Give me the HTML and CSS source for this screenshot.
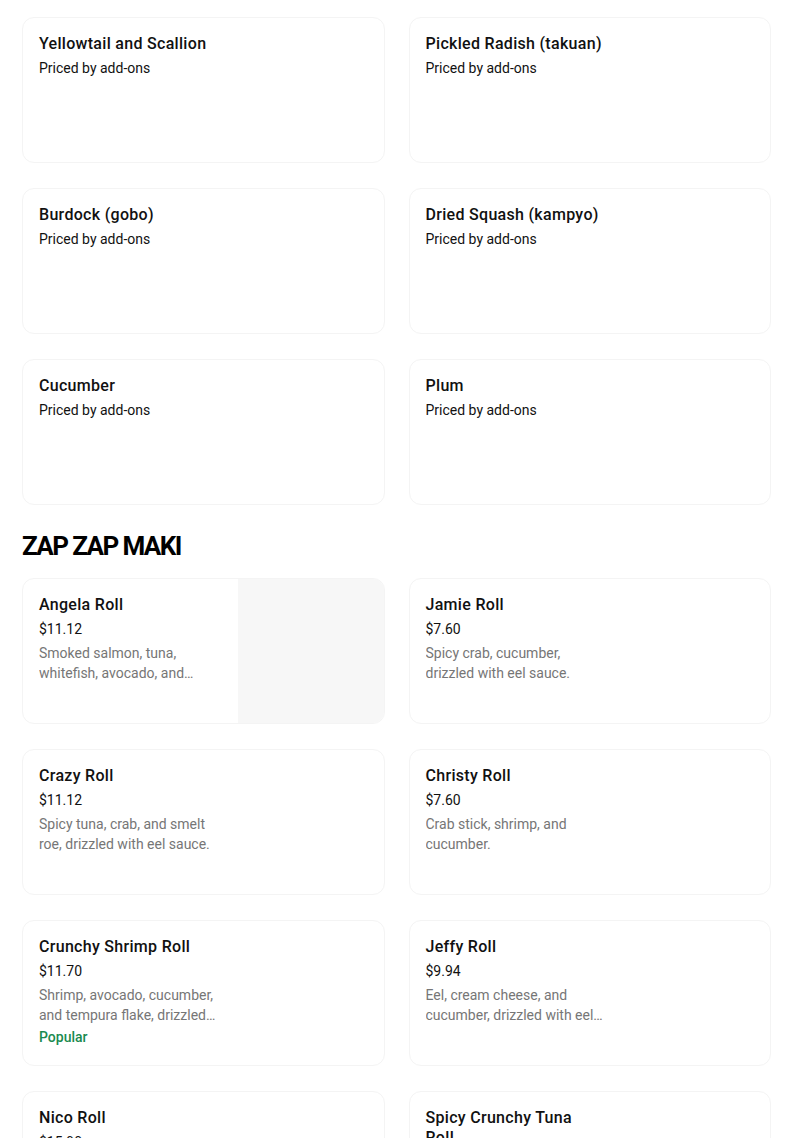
FILE: index.html
```html
<!DOCTYPE html>
<html lang="en">
<head>
<meta charset="utf-8">
<title>Menu</title>
<link rel="stylesheet" href="styles.css">
</head>
<body>
<main class="menu">
  <section class="section">
    <div class="grid">
      <div class="card"><div class="info"><div class="title">Yellowtail and Scallion</div><div class="price">Priced by add-ons</div></div><div class="thumb"></div></div>
      <div class="card"><div class="info"><div class="title">Pickled Radish (takuan)</div><div class="price">Priced by add-ons</div></div><div class="thumb"></div></div>
      <div class="card"><div class="info"><div class="title">Burdock (gobo)</div><div class="price">Priced by add-ons</div></div><div class="thumb"></div></div>
      <div class="card"><div class="info"><div class="title">Dried Squash (kampyo)</div><div class="price">Priced by add-ons</div></div><div class="thumb"></div></div>
      <div class="card"><div class="info"><div class="title">Cucumber</div><div class="price">Priced by add-ons</div></div><div class="thumb"></div></div>
      <div class="card"><div class="info"><div class="title">Plum</div><div class="price">Priced by add-ons</div></div><div class="thumb"></div></div>
    </div>
  </section>
  <section class="section">
    <h2 class="heading">ZAP ZAP MAKI</h2>
    <div class="grid">
      <div class="card"><div class="info"><div class="title">Angela Roll</div><div class="price">$11.12</div><div class="desc">Smoked salmon, tuna, whitefish, avocado, and cucumber, drizzled with eel sauce.</div></div><div class="thumb photo"></div></div>
      <div class="card"><div class="info"><div class="title">Jamie Roll</div><div class="price">$7.60</div><div class="desc">Spicy crab, cucumber, drizzled with eel sauce.</div></div><div class="thumb"></div></div>
      <div class="card"><div class="info"><div class="title">Crazy Roll</div><div class="price">$11.12</div><div class="desc">Spicy tuna, crab, and smelt roe, drizzled with eel sauce.</div></div><div class="thumb"></div></div>
      <div class="card"><div class="info"><div class="title">Christy Roll</div><div class="price">$7.60</div><div class="desc">Crab stick, shrimp, and cucumber.</div></div><div class="thumb"></div></div>
      <div class="card"><div class="info"><div class="title">Crunchy Shrimp Roll</div><div class="price">$11.70</div><div class="desc">Shrimp, avocado, cucumber, and tempura flake, drizzled with eel sauce.</div><div class="tag">Popular</div></div><div class="thumb"></div></div>
      <div class="card"><div class="info"><div class="title">Jeffy Roll</div><div class="price">$9.94</div><div class="desc">Eel, cream cheese, and cucumber, drizzled with eel sauce.</div></div><div class="thumb"></div></div>
      <div class="card"><div class="info"><div class="title">Nico Roll</div><div class="price">$15.90</div><div class="desc">Salmon, avocado, and cucumber, topped with spicy tuna.</div></div><div class="thumb"></div></div>
      <div class="card"><div class="info"><div class="title">Spicy Crunchy Tuna Roll</div><div class="price">$9.94</div><div class="desc">Spicy tuna, cucumber, and tempura flake.</div></div><div class="thumb"></div></div>
    </div>
  </section>
</main>
</body>
</html>
```

FILE: styles.css
```css
* { box-sizing: border-box; }
html, body { margin: 0; padding: 0; background: #ffffff; }
body {
  font-family: Roboto, "Liberation Sans", Arial, sans-serif;
  color: #000000;
  -webkit-font-smoothing: antialiased;
}
.menu {
  width: 749px;
  margin-left: 22px;
  padding-top: 17px;
}
.grid {
  display: grid;
  grid-template-columns: 1fr 1fr;
  column-gap: 24px;
  row-gap: 25px;
}
.card {
  display: flex;
  height: 146px;
  border: 1px solid #f4f4f4;
  border-radius: 12px;
  overflow: hidden;
  background: #ffffff;
}
.info {
  flex: 1;
  min-width: 0;
  padding: 16px 16px 0 16px;
}
.thumb {
  flex: 0 0 146px;
  height: 100%;
}
.thumb.photo { background: #f7f7f7; }
.title {
  max-width: 178px;
  font-size: 16px;
  line-height: 20px;
  font-weight: 500;
  letter-spacing: 0.3px;
  color: #111111;
}
.price {
  margin-top: 4px;
  font-size: 14px;
  line-height: 20px;
  color: #111111;
}
.desc {
  margin-top: 4px;
  font-size: 14px;
  line-height: 20px;
  color: #767676;
  display: -webkit-box;
  -webkit-line-clamp: 2;
  -webkit-box-orient: vertical;
  overflow: hidden;
}
.tag {
  margin-top: 2px;
  font-size: 14px;
  line-height: 20px;
  font-weight: 500;
  color: #1a8a4f;
}
.heading {
  margin: 25px 0 16px 0;
  font-size: 26px;
  line-height: 32px;
  font-weight: 700;
  letter-spacing: -1.6px;
}
```
